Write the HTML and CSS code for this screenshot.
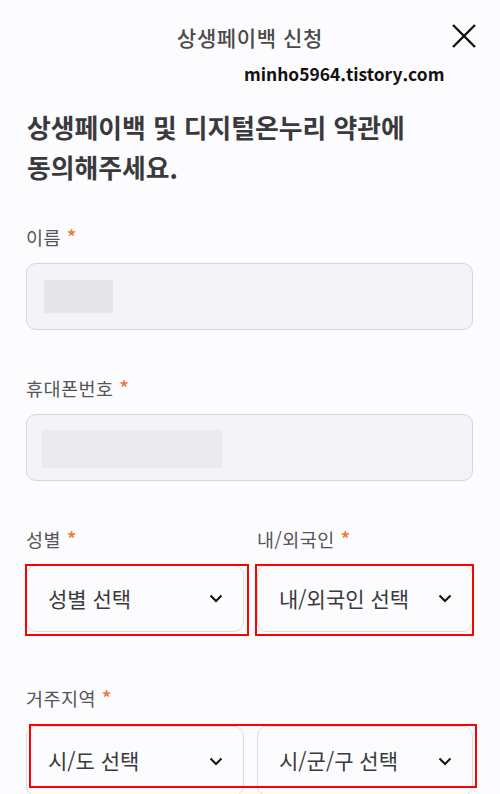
FILE: index.html
```html
<!DOCTYPE html>
<html lang="ko">
<head>
<meta charset="utf-8">
<title>상생페이백 신청</title>
<link rel="stylesheet" href="styles.css">
</head>
<body>
<div class="page">
  <header class="topbar">
    <h1 class="topbar-title">상생페이백 신청</h1>
    <button class="close-btn" aria-label="닫기">
      <svg width="24" height="24" viewBox="0 0 24 24"><path d="M1 1L23 23M23 1L1 23" stroke="#111" stroke-width="2.4" fill="none"/></svg>
    </button>
    <div class="watermark">minho5964.tistory.com</div>
  </header>

  <h2 class="headline">상생페이백 및 디지털온누리 약관에<br>동의해주세요.</h2>

  <form class="form">
    <div class="field">
      <div class="label">이름 <span class="req">*</span></div>
      <div class="input"><span class="mask mask-name"></span></div>
    </div>
    <div class="field">
      <div class="label">휴대폰번호 <span class="req">*</span></div>
      <div class="input"><span class="mask mask-phone"></span></div>
    </div>
    <div class="row">
      <div class="field col">
        <div class="label">성별 <span class="req">*</span></div>
        <div class="select-wrap">
          <div class="select"><span>성별 선택</span><svg class="chev" width="14" height="9" viewBox="0 0 14 9"><path d="M1.5 1.5L7 7L12.5 1.5" stroke="#111" stroke-width="2" fill="none"/></svg></div>
          <div class="mark mark-a"></div>
        </div>
      </div>
      <div class="field col">
        <div class="label">내/외국인 <span class="req">*</span></div>
        <div class="select-wrap">
          <div class="select"><span>내/외국인 선택</span><svg class="chev" width="14" height="9" viewBox="0 0 14 9"><path d="M1.5 1.5L7 7L12.5 1.5" stroke="#111" stroke-width="2" fill="none"/></svg></div>
          <div class="mark mark-b"></div>
        </div>
      </div>
    </div>
    <div class="field region">
      <div class="label">거주지역 <span class="req">*</span></div>
      <div class="region-row">
        <div class="select"><span>시/도 선택</span><svg class="chev" width="14" height="9" viewBox="0 0 14 9"><path d="M1.5 1.5L7 7L12.5 1.5" stroke="#111" stroke-width="2" fill="none"/></svg></div>
        <div class="select"><span>시/군/구 선택</span><svg class="chev" width="14" height="9" viewBox="0 0 14 9"><path d="M1.5 1.5L7 7L12.5 1.5" stroke="#111" stroke-width="2" fill="none"/></svg></div>
        <div class="mark mark-c"></div>
      </div>
    </div>
  </form>
</div>
</body>
</html>
```
FILE: styles.css
```css
* { box-sizing: border-box; }
html, body {
  margin: 0;
  padding: 0;
  background: #fcfbfd;
  overflow: hidden;
}
body {
  font-family: "Noto Sans CJK KR", "Noto Sans", sans-serif;
  color: #333;
}
.page {
  width: 500px;
  height: 794px;
  overflow: hidden;
  padding: 0 27px 0 26px;
}
.topbar {
  position: relative;
  height: 74px;
  display: flex;
  align-items: center;
  justify-content: center;
  margin: 0 -27px 0 -26px;
}
.topbar-title {
  margin: 0;
  margin-top: -1px;
  font-size: 21px;
  font-weight: 500;
  color: #4a4a4c;
  line-height: 26px;
  letter-spacing: 0.6px;
}
.close-btn {
  position: absolute;
  right: 24px;
  top: 24px;
  width: 24px;
  height: 24px;
  padding: 0;
  border: 0;
  background: none;
  display: block;
}
.close-btn svg { display: block; }
.watermark {
  position: absolute;
  left: 244px;
  top: 62px;
  font-family: "Noto Sans CJK KR", "Noto Sans", sans-serif;
  font-weight: 700;
  font-size: 17.4px;
  line-height: 24px;
  color: #111;
}
.headline {
  margin: 33px 0 0 1px;
  font-size: 25.8px;
  font-weight: 700;
  line-height: 40px;
  color: #3a3a3c;
  letter-spacing: 0;
}
.form {
  display: flex;
  flex-direction: column;
  gap: 46px;
  margin-top: 38px;
}
.field { display: flex; flex-direction: column; }
.label {
  font-size: 18.5px;
  line-height: 24px;
  color: #555558;
  margin-bottom: 14px;
  margin-left: 0;
  letter-spacing: 0.5px;
}
.req { color: #f07838; font-size: 20px; font-weight: 500; }
.input {
  height: 67px;
  border: 1px solid #d6d5da;
  border-radius: 10px;
  background: #f4f3f6;
  display: flex;
  align-items: center;
}
.mask { display: block; background: #e6e5ea; }
.mask-name { width: 69px; height: 33px; margin-left: 17px; }
.mask-phone { width: 180px; height: 38px; margin-left: 15px; background: #ebebee; margin-top: 3px; }
.row {
  display: grid;
  grid-template-columns: 218px 216px;
  column-gap: 13px;
}
.select-wrap { position: relative; }
.select {
  height: 67px;
  border: 1px solid #dcdbe0;
  border-radius: 10px;
  background: #fcfbfd;
  display: flex;
  align-items: center;
  justify-content: space-between;
  padding: 0 20px 0 21px;
  font-size: 21px;
  color: #3a3a3c;
}
.select span { margin-top: -2px; }
.chev { display: block; flex: none; }
.mark {
  position: absolute;
  border: 2px solid #f00;
  pointer-events: none;
}
.mark-a { left: -1px; top: -1px; right: -5px; bottom: -4px; }
.mark-b { left: -2px; top: -1px; right: -1px; bottom: -4px; }
.region { margin-top: 8px; }
.region .label { margin-bottom: 16px; }
.region-row {
  position: relative;
  display: grid;
  grid-template-columns: 218px 216px;
  column-gap: 13px;
}
.region-row .select { height: 70px; }
.mark-c { left: 3px; top: -2px; right: -4px; bottom: 8px; }
```
